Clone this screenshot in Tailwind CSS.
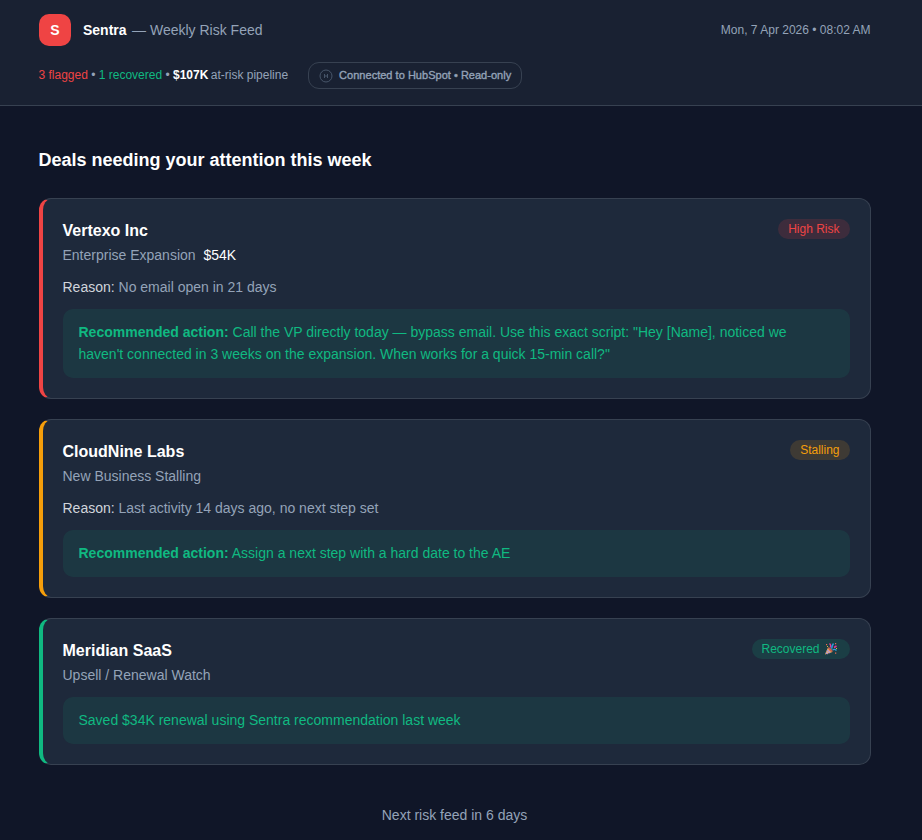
<!DOCTYPE html>
<html lang="en">
  <head>
    <meta charset="UTF-8">
    <title>Sentra - Weekly Risk Feed</title>
    <script src="https://cdn.jsdelivr.net/npm/@tailwindcss/browser@4"></script>
  </head>
  <body class="bg-[#101628] h-[840px] overflow-hidden font-['Liberation_Sans',Arial,sans-serif] text-sm leading-[22px] text-[#94a3b8]">
    <!-- Header -->
    <header class="h-[106px] bg-[#192132] border-b border-[#374151] pt-3.5">
      <div class="w-[832px] ml-[38.5px]">
        <div class="flex items-center justify-between h-8">
          <div class="flex items-center">
            <div class="size-8 rounded-[10px] bg-[#ef4444] text-white font-bold flex items-center justify-center pl-px">S</div>
            <span class="ml-[12.5px] font-bold text-white">Sentra</span>
            <span class="ml-[5.5px]">— Weekly Risk Feed</span>
          </div>
          <div class="text-xs">Mon, 7 Apr 2026 • 08:02 AM</div>
        </div>
        <div class="flex items-center mt-4 text-xs">
          <div class="whitespace-nowrap pb-0.5">
            <span class="text-[#ef4444]">3 flagged</span> • <span class="text-[#10b981]">1 recovered</span> • <span class="font-bold text-white">$107K</span> <span class="-ml-px">at-risk pipeline</span>
          </div>
          <div class="ml-[19.5px] h-[27px] w-[214px] flex items-center px-2.5 rounded-[11px] border border-[#374151] text-[11px] font-medium whitespace-nowrap">
            <svg class="size-3.5 shrink-0" viewBox="0 0 14 14" fill="none" stroke="#475569">
              <circle cx="7" cy="7" r="6" />
              <path d="M5.5 5v4M8.5 5v4M5.5 7h3" />
            </svg>
            <span class="ml-[6.5px] [-webkit-text-stroke:0.35px_#94a3b8] tracking-[0.002em]">Connected to HubSpot • Read-only</span>
          </div>
        </div>
      </div>
    </header>

    <main class="w-[832px] ml-[38.5px] pt-10">
      <h1 class="text-lg leading-7 font-bold text-white mb-6">Deals needing your attention this week</h1>

      <!-- Deal cards -->
      <div class="flex flex-col gap-5">
        <section class="bg-[#1e293b] border border-[#374151] border-l-4 border-l-[#ef4444] rounded-xl p-5">
          <div class="flex justify-between items-start">
            <div>
              <h2 class="text-base leading-[23px] mb-0.5 font-bold text-white">Vertexo Inc</h2>
              <p>Enterprise Expansion <span class="ml-1 text-white">$54K</span></p>
            </div>
            <span class="h-5 px-2.5 rounded-full bg-[#ef4444]/15 text-[#ef4444] text-xs leading-5">High Risk</span>
          </div>
          <p class="mt-2.5"><span class="text-[#d1d5db]">Reason:</span> No email open in 21 days</p>
          <div class="mt-[11px] px-4 pt-3 pb-[13px] rounded-[10px] bg-[#10b981]/10 text-[#10b981]">
            <b>Recommended action:</b> Call the VP directly today — bypass email. Use this exact script: "Hey [Name], noticed we<br>haven't connected in 3 weeks on the expansion. When works for a quick 15-min call?"
          </div>
        </section>

        <section class="bg-[#1e293b] border border-[#374151] border-l-4 border-l-[#f59e0b] rounded-xl p-5">
          <div class="flex justify-between items-start">
            <div>
              <h2 class="text-base leading-[23px] mb-0.5 font-bold text-white">CloudNine Labs</h2>
              <p>New Business Stalling</p>
            </div>
            <span class="h-5 px-2.5 rounded-full bg-[#f59e0b]/15 text-[#f59e0b] text-xs leading-5">Stalling</span>
          </div>
          <p class="mt-2.5"><span class="text-[#d1d5db]">Reason:</span> Last activity 14 days ago, no next step set</p>
          <div class="mt-[11px] px-4 pt-3 pb-[13px] rounded-[10px] bg-[#10b981]/10 text-[#10b981]">
            <b>Recommended action:</b> Assign a next step with a hard date to the AE
          </div>
        </section>

        <section class="bg-[#1e293b] border border-[#374151] border-l-4 border-l-[#10b981] rounded-xl p-5">
          <div class="flex justify-between items-start">
            <div>
              <h2 class="text-base leading-[23px] mb-0.5 font-bold text-white">Meridian SaaS</h2>
              <p>Upsell / Renewal Watch</p>
            </div>
            <span class="h-5 w-[98px] pl-2.5 rounded-full bg-[#10b981]/15 text-[#10b981] text-xs leading-5 flex items-center">Recovered
              <!-- party popper -->
              <svg class="ml-1 size-3.5" viewBox="0 0 14 14">
                <path d="M1 12.5 4 5.5 8.5 10z" fill="#f5b860" />
                <path d="M3 8l3 3M2 10.3 3.6 12" stroke="#a78bda" stroke-width="1.2" />
                <ellipse cx="6.3" cy="7.7" rx="1.2" ry="3" transform="rotate(-45 6.3 7.7)" fill="#c9604a" />
                <path d="M5.5 1.5q2 1.5.8 4" stroke="#e23a9a" stroke-width="1.3" fill="none" />
                <path d="M7.7 6.8q0-3 1.8-5.3M8.5 8q2-1.5 4 .5" stroke="#2e9be0" stroke-width="1.4" fill="none" />
                <path d="M10 5.5 12.5 4" stroke="#e23a9a" stroke-width="1.5" />
                <path d="M2 2h1.2v1.2H2zM11 1h1.2v1.2H11zM11 10.5h1.3v1.3H11z" fill="#e56a54" />
                <path d="M3 4h1v1H3zM12 6h1v1h-1z" fill="#e8b33c" />
              </svg>
            </span>
          </div>
          <div class="mt-[11px] px-4 pt-3 pb-[13px] rounded-[10px] bg-[#10b981]/10 text-[#10b981]">
            Saved $34K renewal using Sentra recommendation last week
          </div>
        </section>
      </div>

      <p class="mt-[39px] text-center">Next risk feed in 6 days</p>
    </main>
  </body>
</html>
